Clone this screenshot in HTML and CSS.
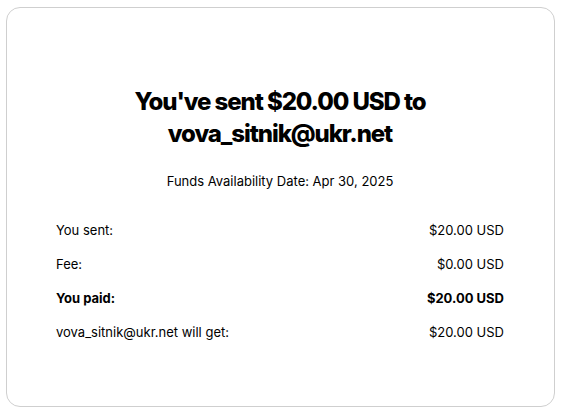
FILE: index.html
```html
<!doctype html>
<html>
  <head>
    <meta charset="UTF-8" />
    <title>Payment sent</title>
    <link rel="stylesheet" href="styles.css">
  </head>
  <body>
    <main class="card">
      <h1 class="title">You've sent $20.00 USD to vova_sitnik@ukr.net</h1>
      <p class="availability">Funds Availability Date: Apr 30, 2025</p>
      <dl class="summary">
        <div class="row">
          <dt>You sent:</dt>
          <dd>$20.00 USD</dd>
        </div>
        <div class="row">
          <dt>Fee:</dt>
          <dd>$0.00 USD</dd>
        </div>
        <div class="row row-total">
          <dt>You paid:</dt>
          <dd>$20.00 USD</dd>
        </div>
        <div class="row">
          <dt>vova_sitnik@ukr.net will get:</dt>
          <dd>$20.00 USD</dd>
        </div>
      </dl>
    </main>
  </body>
</html>
```

FILE: styles.css
```css
* {
  margin: 0;
  padding: 0;
  box-sizing: border-box;
}

body {
  background: #fff;
  padding: 7px 11px 9px 6px;
  font-family: Inter, "Liberation Sans", sans-serif;
  color: #000;
}

.card {
  height: 400px;
  border: 1px solid #cfcfcf;
  border-radius: 14px;
  padding: 78px 50px 0 49px;
}

.title {
  width: 320px;
  margin: 0 auto;
  text-align: center;
  font-size: 24px;
  line-height: 32px;
  font-weight: 800;
  letter-spacing: -1.1px;
}

.availability {
  margin-top: 21px;
  text-align: center;
  font-size: 13px;
  line-height: 20px;
}

.summary {
  display: flex;
  flex-direction: column;
  gap: 14px;
  margin-top: 29px;
  font-size: 13px;
  line-height: 20px;
}

.row {
  display: flex;
  justify-content: space-between;
}

.row-total {
  font-weight: 700;
}
```
